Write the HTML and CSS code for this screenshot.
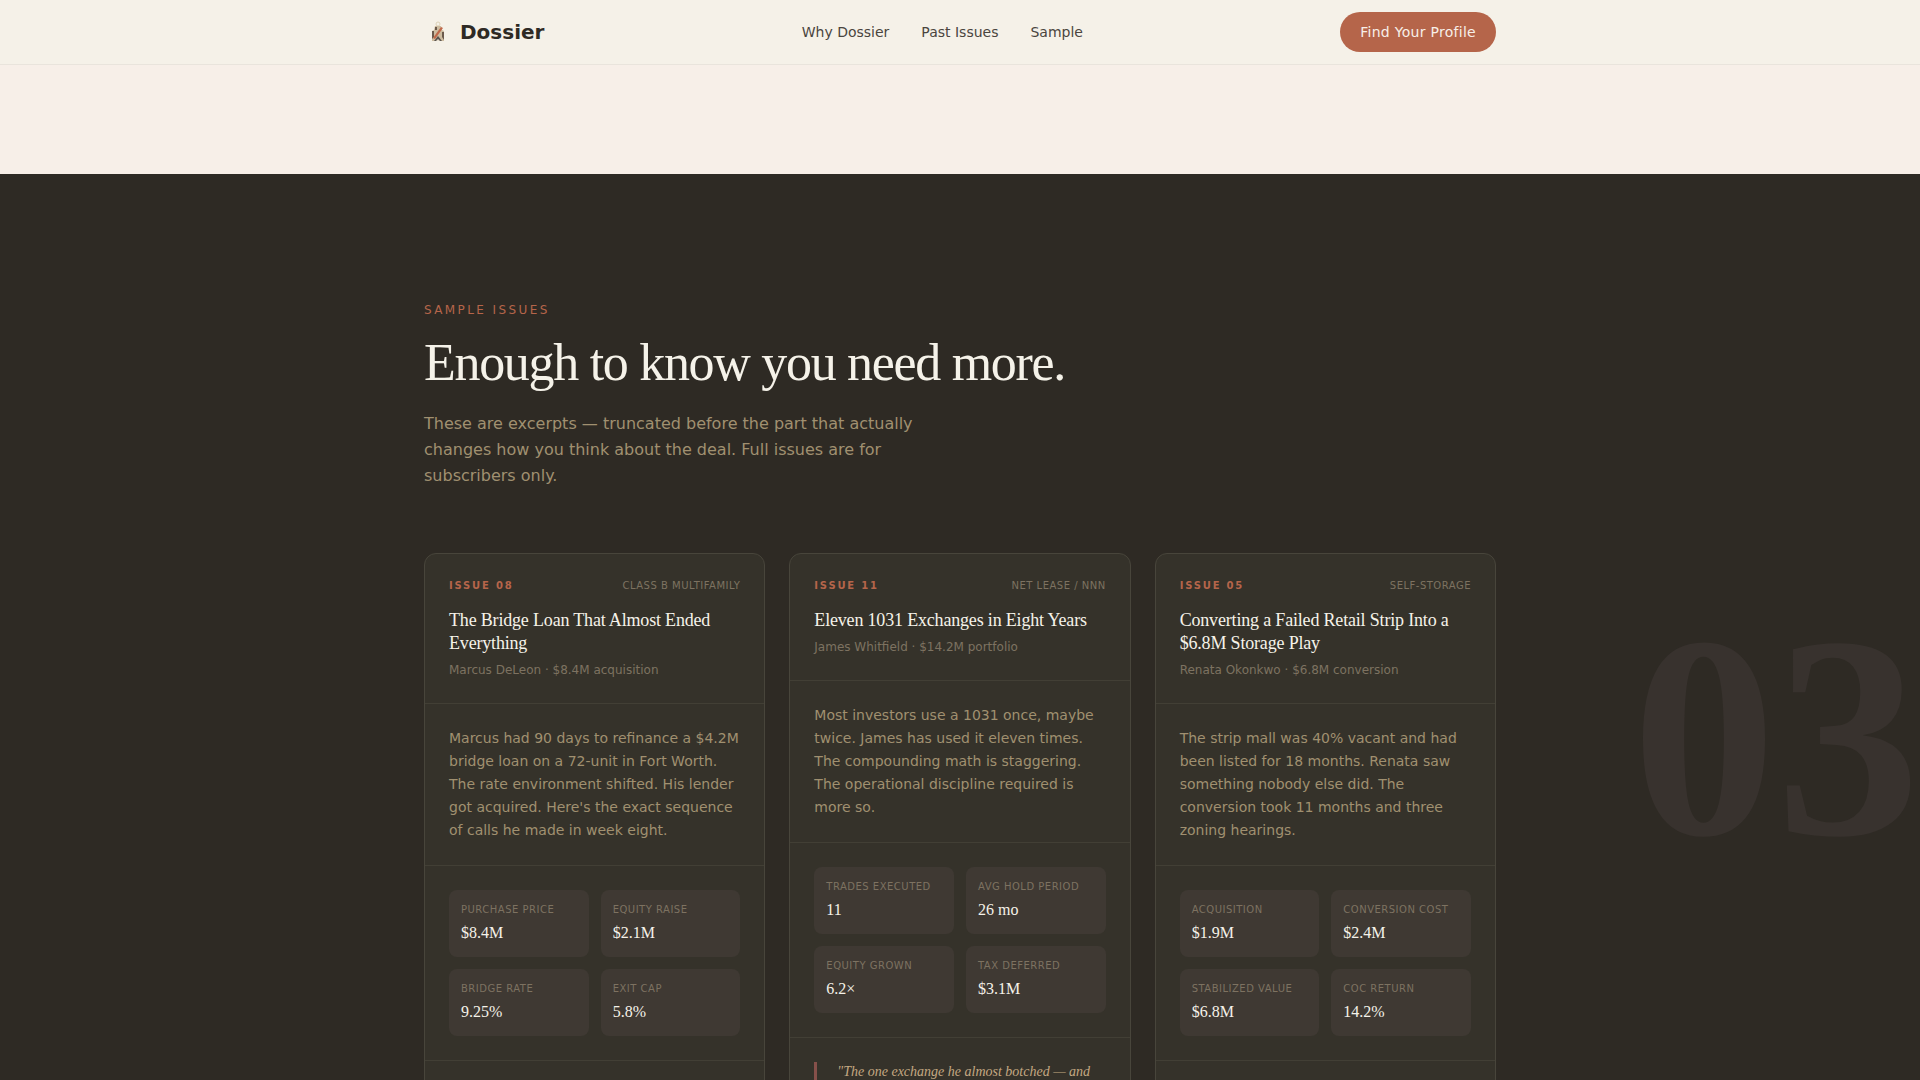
FILE: index.html
```html
<!DOCTYPE html>
<html lang="en">
<head>
    <meta charset="UTF-8">
    <meta name="viewport" content="width=device-width, initial-scale=1.0">
    <title>Dossier</title>
    <link rel="stylesheet" href="styles.css">
</head>
<body>
    <header class="site-header">
        <div class="container header-inner">
            <a href="#" class="logo">
                <svg class="logo-mark" viewBox="0 0 28 28" aria-hidden="true">
                    <circle cx="14" cy="6" r="2" fill="none" stroke="#ddd2b8"/>
                    <path d="M8 13l2-1 1-4h6l1 4 2 1v10H8z" fill="#cdbca0"/>
                    <path d="M8 13h2v6l-2 2zM18 14h2v8l-2-3zM11 9h2v3h-2z" fill="#6b5a4c"/>
                    <path d="M9 20l8-11 2 1-8 11z" fill="#c0694a"/>
                    <path d="M10 23l4-5 4 5z" fill="#5a544e"/>
                    <path d="M12 23l2-2 2 2z" fill="#e9e0cf"/>
                </svg>
                <span>Dossier</span>
            </a>
            <nav class="nav">
                <a href="#why">Why Dossier</a>
                <a href="#issues">Past Issues</a>
                <a href="#sample">Sample</a>
            </nav>
            <button type="button" class="btn">Find Your Profile</button>
        </div>
    </header>

    <main>
        <section class="sample" id="sample">
            <div class="big-number" aria-hidden="true">03</div>
            <div class="container">
                <p class="eyebrow">Sample Issues</p>
                <h2>Enough to know you need more.</h2>
                <p class="intro">These are excerpts — truncated before the part that actually changes how you think about the deal. Full issues are for subscribers only.</p>

                <div class="cards">
                    <article class="card">
                        <div class="card-head">
                            <div class="card-top">
                                <span class="issue">Issue 08</span>
                                <span class="tag">Class B Multifamily</span>
                            </div>
                            <h3>The Bridge Loan That Almost Ended Everything</h3>
                            <p class="meta">Marcus DeLeon · $8.4M acquisition</p>
                        </div>
                        <p class="card-text">Marcus had 90 days to refinance a $4.2M bridge loan on a 72-unit in Fort Worth. The rate environment shifted. His lender got acquired. Here's the exact sequence of calls he made in week eight.</p>
                        <dl class="stats">
                            <div class="stat"><dt>Purchase Price</dt><dd>$8.4M</dd></div>
                            <div class="stat"><dt>Equity Raise</dt><dd>$2.1M</dd></div>
                            <div class="stat"><dt>Bridge Rate</dt><dd>9.25%</dd></div>
                            <div class="stat"><dt>Exit Cap</dt><dd>5.8%</dd></div>
                        </dl>
                    </article>

                    <article class="card">
                        <div class="card-head">
                            <div class="card-top">
                                <span class="issue">Issue 11</span>
                                <span class="tag">Net Lease / NNN</span>
                            </div>
                            <h3>Eleven 1031 Exchanges in Eight Years</h3>
                            <p class="meta">James Whitfield · $14.2M portfolio</p>
                        </div>
                        <p class="card-text">Most investors use a 1031 once, maybe twice. James has used it eleven times. The compounding math is staggering. The operational discipline required is more so.</p>
                        <dl class="stats">
                            <div class="stat"><dt>Trades Executed</dt><dd>11</dd></div>
                            <div class="stat"><dt>Avg Hold Period</dt><dd>26 mo</dd></div>
                            <div class="stat"><dt>Equity Grown</dt><dd>6.2×</dd></div>
                            <div class="stat"><dt>Tax Deferred</dt><dd>$3.1M</dd></div>
                        </dl>
                        <blockquote>"The one exchange he almost botched — and</blockquote>
                    </article>

                    <article class="card">
                        <div class="card-head">
                            <div class="card-top">
                                <span class="issue">Issue 05</span>
                                <span class="tag">Self-Storage</span>
                            </div>
                            <h3>Converting a Failed Retail Strip Into a $6.8M Storage Play</h3>
                            <p class="meta">Renata Okonkwo · $6.8M conversion</p>
                        </div>
                        <p class="card-text">The strip mall was 40% vacant and had been listed for 18 months. Renata saw something nobody else did. The conversion took 11 months and three zoning hearings.</p>
                        <dl class="stats">
                            <div class="stat"><dt>Acquisition</dt><dd>$1.9M</dd></div>
                            <div class="stat"><dt>Conversion Cost</dt><dd>$2.4M</dd></div>
                            <div class="stat"><dt>Stabilized Value</dt><dd>$6.8M</dd></div>
                            <div class="stat"><dt>CoC Return</dt><dd>14.2%</dd></div>
                        </dl>
                    </article>
                </div>
            </div>
        </section>
    </main>
</body>
</html>
```
FILE: styles.css
```css
*{box-sizing:border-box; margin:0; padding:0;}
body{
    background:#f7efe8; color:#2e2a24;
    font-family:"DejaVu Sans", sans-serif; font-size:14px;
}
a{color:inherit; text-decoration:none;}
.container{max-width:1120px; margin:0 auto; padding:0 24px;}

/* header */
.site-header{
    position:sticky; top:0; z-index:10;
    background:#f5f1e8; border-bottom:1px solid #e9e4dc;
}
.header-inner{display:flex; justify-content:space-between; align-items:center; height:64px;}
.logo{display:flex; align-items:center; gap:8px; font-size:20px; font-weight:bold;}
.logo-mark{width:28px; height:28px;}
.nav{display:flex; gap:32px; color:#4a453e;}
.btn{
    height:40px; padding:0 20px; border:0; border-radius:20px;
    background:#b5654a; color:#f7efe8;
    font-family:inherit; font-size:14px; letter-spacing:0.02em; cursor:pointer;
}

/* sample issues */
.sample{
    position:relative; overflow:hidden;
    margin-top:109px; padding:128px 0;
    background:#2e2a24;
}
.big-number{
    position:absolute; top:419px; right:0;
    font-family:"Liberation Serif", serif; font-size:288px; font-weight:bold; line-height:288px;
    color:#38322e;
}
.eyebrow{
    margin-bottom:16px;
    color:#b5654a; font-size:12px; line-height:16px;
    letter-spacing:0.2em; text-transform:uppercase;
}
h2{
    margin-bottom:20px;
    color:#f5f2e9; font-family:"Liberation Serif", serif; font-weight:normal;
    font-size:52px; line-height:57px; letter-spacing:-0.025em;
}
.intro{max-width:520px; margin-bottom:64px; color:#a09070; font-size:16px; line-height:26px;}

.cards{display:grid; grid-template-columns:repeat(3, 1fr); gap:24px;}
.card{
    background:#35322a; border:1px solid #48453b; border-radius:12px;
    overflow:hidden;
}
.card-head, .card-text, .stats{padding:24px; border-bottom:1px solid #423f35;}
.card-top{display:flex; justify-content:space-between; align-items:center; margin-bottom:16px; line-height:15px;}
.issue{color:#b5654a; font-size:10px; font-weight:bold; letter-spacing:0.18em; text-transform:uppercase;}
.tag{color:#7d7261; font-size:10px; letter-spacing:0.05em; text-transform:uppercase;}
h3{
    margin-bottom:6px;
    color:#f5f2e9; font-family:"Liberation Serif", serif; font-weight:normal;
    font-size:18px; line-height:23px; letter-spacing:-0.01em;
}
.meta{color:#7d7261; font-size:12px; line-height:18px;}
.card-text{padding:23px 24px; color:#a09070; font-size:14px; line-height:23px;}

.stats{display:grid; grid-template-columns:1fr 1fr; gap:12px;}
.stat{padding:12px; background:#3f3933; border-radius:8px;}
dt{margin-bottom:4px; color:#7d7261; font-size:10px; line-height:15px; letter-spacing:0.05em; text-transform:uppercase;}
dd{color:#f5f2e9; font-family:"Liberation Serif", serif; font-size:16px; line-height:24px;}

blockquote{
    margin:24px; padding-left:20px; border-left:3px solid #86504a;
    color:#c4a882; font-family:"Liberation Serif", serif; font-style:italic;
    font-size:14px; line-height:20px;
}
```
